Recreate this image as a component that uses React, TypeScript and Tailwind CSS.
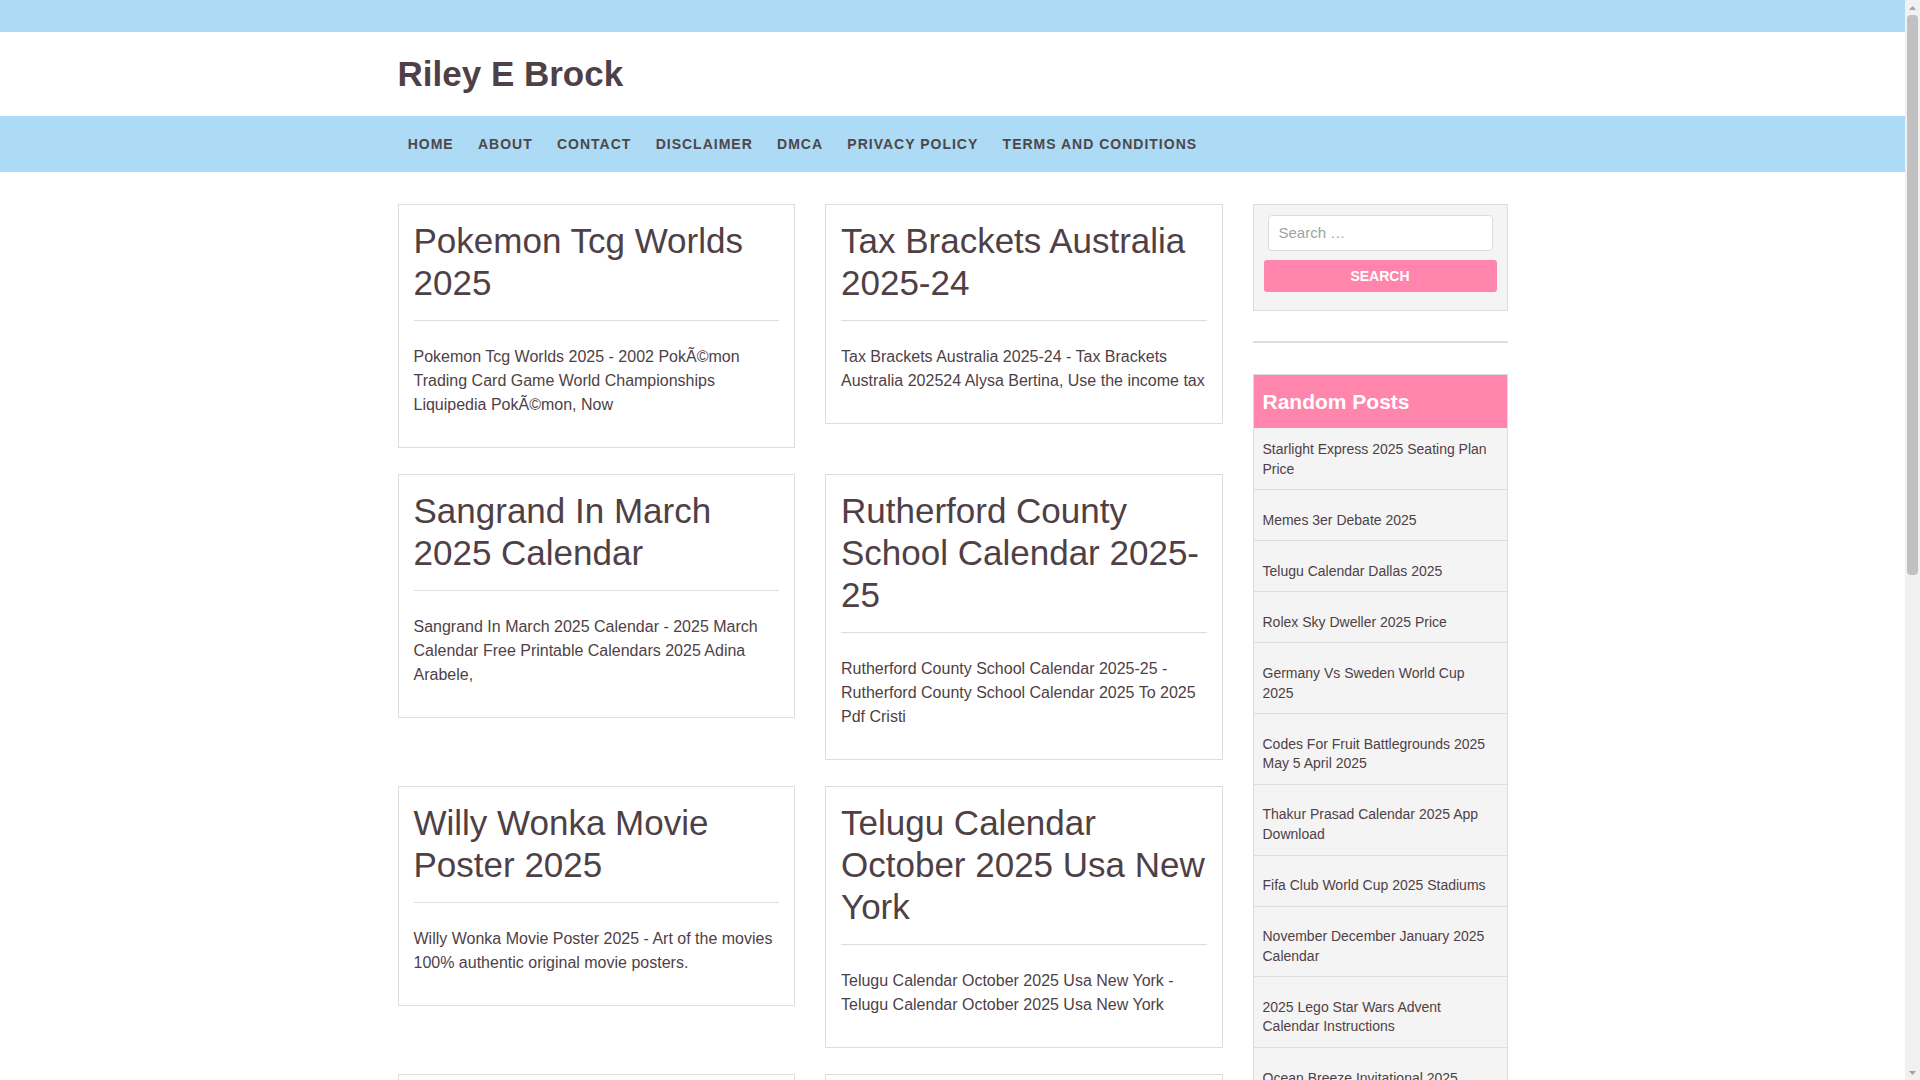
import React from "react";

const posts = [
  {
    title: "Pokemon Tcg Worlds 2025",
    text: "Pokemon Tcg Worlds 2025 - 2002 PokÃ©mon Trading Card Game World Championships Liquipedia PokÃ©mon, Now",
  },
  {
    title: "Tax Brackets Australia 2025-24",
    text: "Tax Brackets Australia 2025-24 - Tax Brackets Australia 202524 Alysa Bertina, Use the income tax",
  },
  {
    title: "Sangrand In March 2025 Calendar",
    text: "Sangrand In March 2025 Calendar - 2025 March Calendar Free Printable Calendars 2025 Adina Arabele,",
  },
  {
    title: "Rutherford County School Calendar 2025-25",
    text: "Rutherford County School Calendar 2025-25 - Rutherford County School Calendar 2025 To 2025 Pdf Cristi",
  },
  {
    title: "Willy Wonka Movie Poster 2025",
    text: "Willy Wonka Movie Poster 2025 - Art of the movies 100% authentic original movie posters.",
  },
  {
    title: "Telugu Calendar October 2025 Usa New York",
    text: "Telugu Calendar October 2025 Usa New York - Telugu Calendar October 2025 Usa New York",
  },
  {
    title: "Ocean Breeze Invitational 2025",
    text: "Ocean Breeze Invitational 2025 - Ocean Breeze Invitational 2025 Schedule And Results",
  },
  {
    title: "Starlight Express 2025 Seating Plan Price",
    text: "Starlight Express 2025 Seating Plan Price - Starlight Express Seating Plan Theatre Royal",
  },
];

const randomPosts = [
  "Starlight Express 2025 Seating Plan Price",
  "Memes 3er Debate 2025",
  "Telugu Calendar Dallas 2025",
  "Rolex Sky Dweller 2025 Price",
  "Germany Vs Sweden World Cup 2025",
  "Codes For Fruit Battlegrounds 2025 May 5 April 2025",
  "Thakur Prasad Calendar 2025 App Download",
  "Fifa Club World Cup 2025 Stadiums",
  "November December January 2025 Calendar",
  "2025 Lego Star Wars Advent Calendar Instructions",
  "Ocean Breeze Invitational 2025 Schedule",
  "Rolex Datejust 2025 Price List",
];

const nav = ["HOME", "ABOUT", "CONTACT", "DISCLAIMER", "DMCA", "PRIVACY POLICY", "TERMS AND CONDITIONS"];

export default function App() {
  return (
    <div
      className="min-h-screen w-[1905px] overflow-hidden bg-white text-[#4f3f46]"
      style={{ fontFamily: '"Liberation Sans", Arial, Helvetica, sans-serif' }}
    >
      <div className="h-[32px] bg-[#addaf4]" />
      <header className="bg-white">
        <div className="mx-auto w-[1110px] pt-[21px] pb-[21px]">
          <h1 className="text-[35px] font-bold leading-[42px] text-[#4f3f46]">Riley E Brock</h1>
        </div>
      </header>
      <nav className="bg-[#addaf4]">
        <div className="mx-auto flex h-[56px] w-[1110px] items-center">
          <ul className="ml-[-2px] flex items-center">
            {nav.map((n) => (
              <li
                key={n}
                className="px-[12.15px] text-[14px] font-bold leading-[20px] tracking-[1px] text-[#4d474a]"
              >
                {n}
              </li>
            ))}
          </ul>
        </div>
      </nav>

      <div className="mx-auto mt-[32px] flex w-[1110px] items-start gap-[30px]">
        <main className="grid w-[825px] grid-cols-2 items-start gap-x-[30px] gap-y-[26px]">
          {posts.map((p) => (
            <article key={p.title} className="border border-[#dddddd] bg-white px-[15px] pt-[15px] pb-[30px]">
              <h2 className="text-[35px] font-normal leading-[42px] text-[#4f3f46]">{p.title}</h2>
              <div className="mt-[16px] h-px bg-[#dddddd]" />
              <p className="mt-[24px] text-[16px] leading-[24px] text-[#4f3f46]">{p.text}</p>
            </article>
          ))}
        </main>

        <aside className="w-[255px]">
          <div className="border border-[#dddddd] bg-[#f4f4f4] px-[10px] pt-[10px] pb-[18px]">
            <div className="mx-[4px] flex h-[36px] items-center rounded-[4px] border border-[#dddddd] bg-white px-[10px]">
              <span className="text-[15px] text-[#9aa5a5]">Search …</span>
            </div>
            <button className="mt-[9px] flex h-[32px] w-full items-center justify-center rounded-[3px] bg-[#ff85ad] text-[14px] font-bold text-white">
              SEARCH
            </button>
          </div>
          <div className="mt-[30px] h-[2px] bg-[#dedede]" />
          <div className="mt-[31px] border border-[#dddddd] bg-[#f4f4f4]">
            <div className="bg-[#ff85ad] px-[9px] pt-[14px] pb-[14px]">
              <h3 className="text-[21px] font-bold leading-[25px] text-white">Random Posts</h3>
            </div>
            <ul>
              {randomPosts.map((r, i) => (
                <li
                  key={r}
                  className={
                    i === 0
                      ? "border-b border-[#dedede] px-[9px] pt-[12px] pb-[10px] text-[14px] leading-[19.6px] text-[#4f3f46]"
                      : "border-b border-[#dedede] px-[9px] pt-[20.5px] pb-[10px] text-[14px] leading-[19.6px] text-[#4f3f46]"
                  }
                >
                  {r}
                </li>
              ))}
            </ul>
          </div>
        </aside>
      </div>
      <div className="h-[40px]" />

      <div className="fixed top-0 right-0 flex h-[1080px] w-[15px] flex-col bg-[#f1f1f1]">
        <div className="flex h-[15px] items-center justify-center">
          <svg width="7" height="4" viewBox="0 0 7 4">
            <path d="M0 4 L3.5 0 L7 4 Z" fill="#a3a3a3" />
          </svg>
        </div>
        <div className="mx-[2px] h-[560px] rounded-[4px] bg-[#c1c1c1]" />
        <div className="flex-1" />
        <div className="flex h-[15px] items-center justify-center">
          <svg width="7" height="4" viewBox="0 0 7 4">
            <path d="M0 0 L3.5 4 L7 0 Z" fill="#a3a3a3" />
          </svg>
        </div>
      </div>
    </div>
  );
}
